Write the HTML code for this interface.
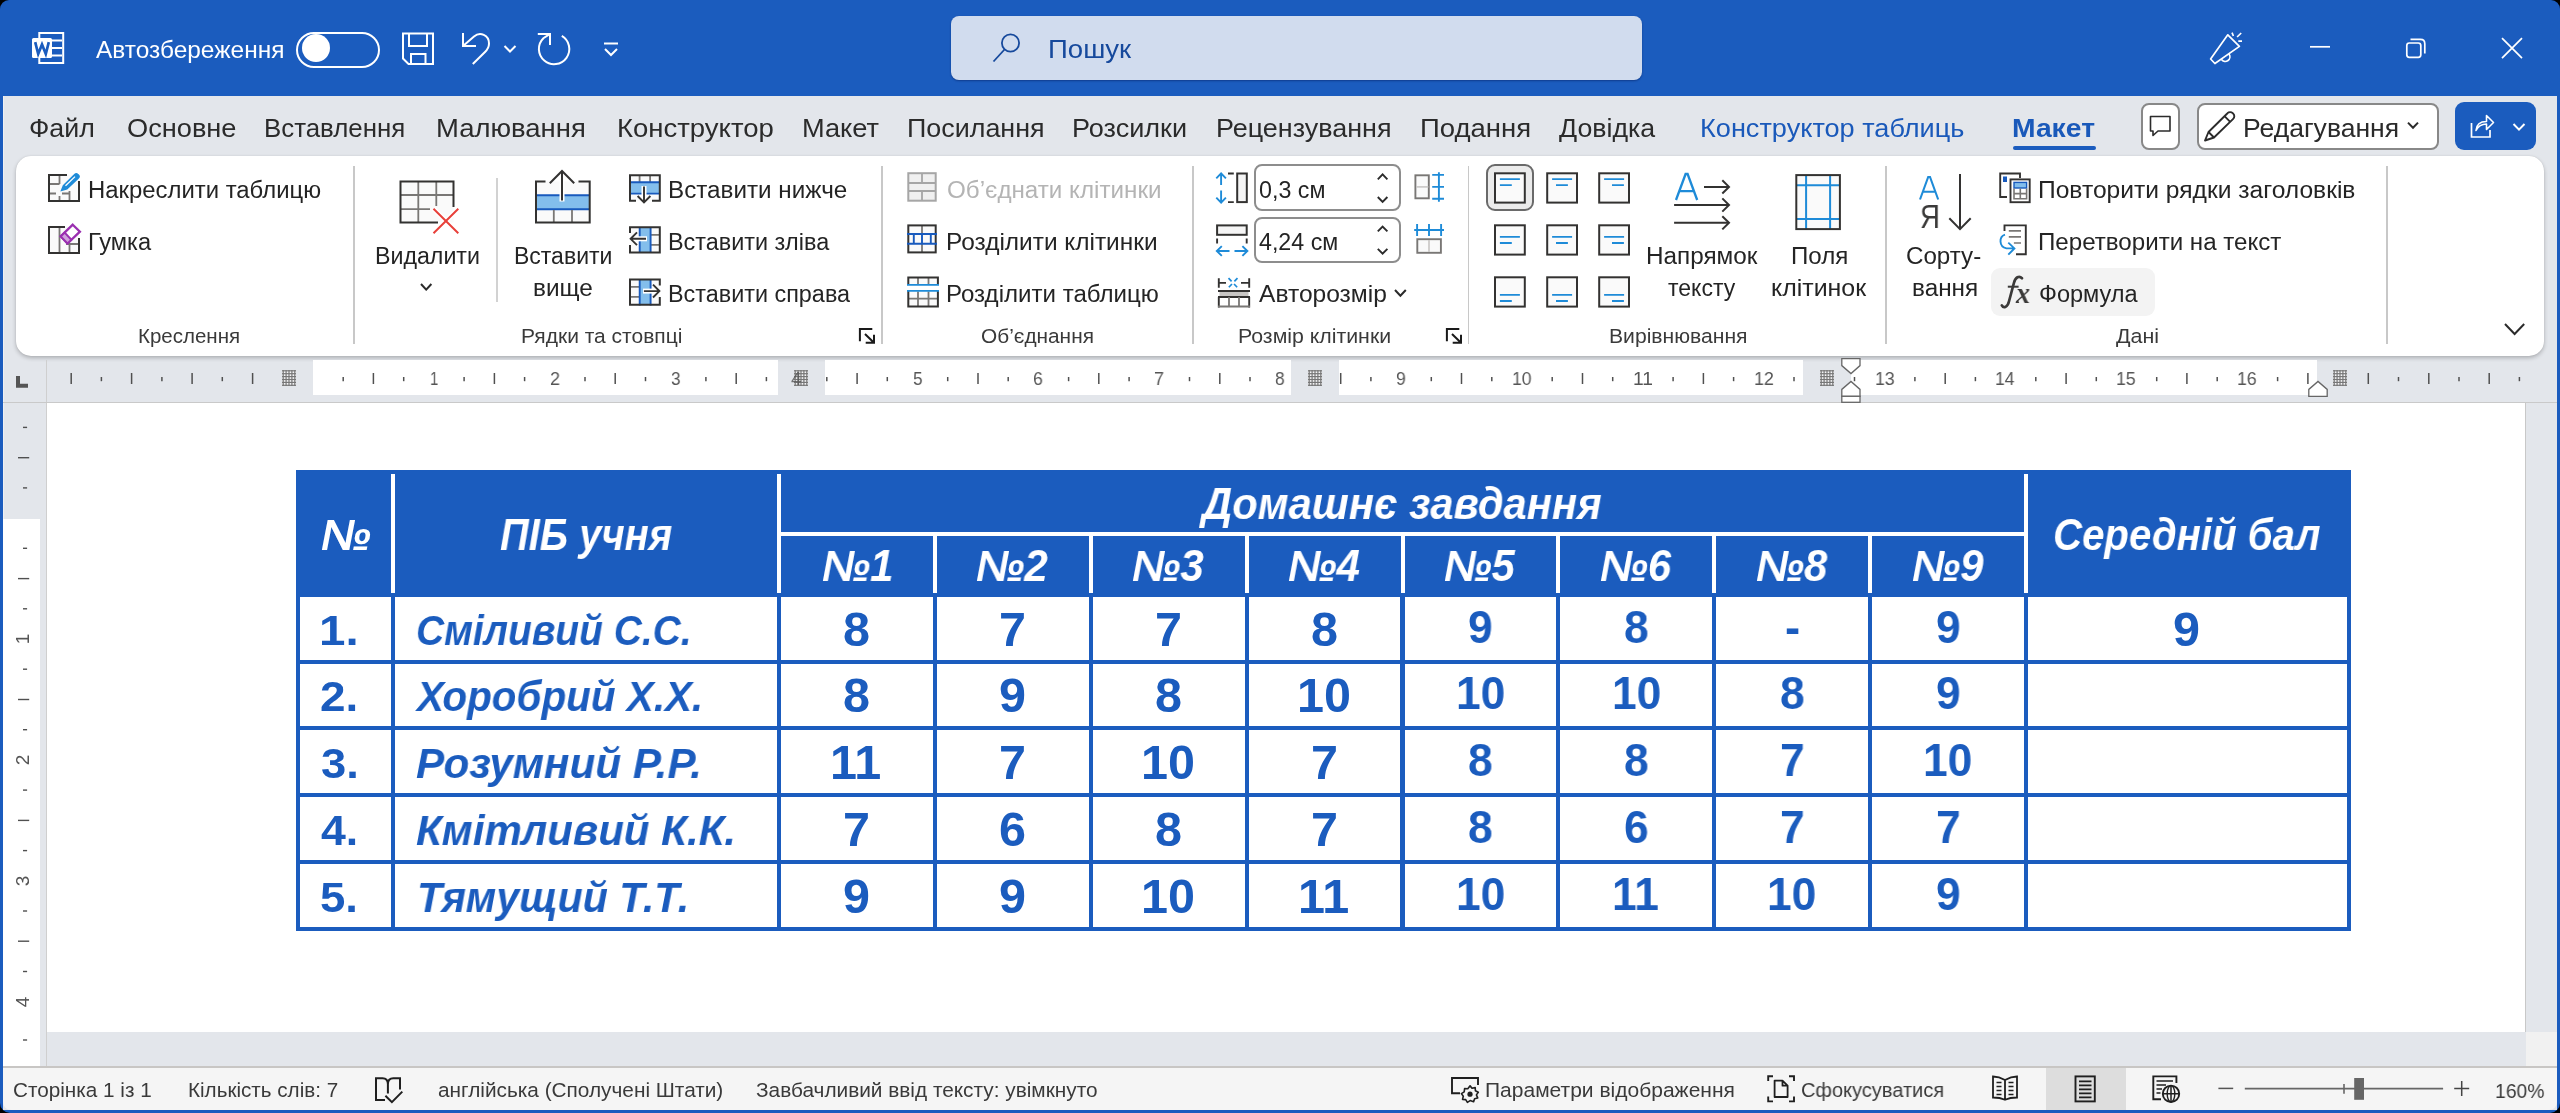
<!DOCTYPE html>
<html lang="uk"><head><meta charset="utf-8"><title>Word</title>
<style>
html,body{margin:0;padding:0;background:#000;overflow:hidden}
body{width:2560px;height:1113px;position:relative;font-family:"Liberation Sans",sans-serif}
#win{position:absolute;left:0;top:0;width:2560px;height:1113px;background:#1b5cbe;border-radius:9px 9px 10px 10px;overflow:hidden}
#win div,#win svg,#win span.t{position:absolute}
span.t{white-space:nowrap;line-height:1;transform-origin:0 0;display:block;will-change:transform}
</style></head><body><div id="win">
<div style="left:3px;top:96px;width:2554px;height:1014px;background:#e3e6eb;"></div>
<div style="left:3px;top:96px;width:1px;height:972px;background:#eef0f3;"></div>
<svg style="left:30px;top:30px;" width="38" height="36" viewBox="30 30 38 36" fill="none">
<rect x="39.3" y="33" width="23.9" height="30" stroke="#fff" stroke-width="2"/>
<path d="M52 40.5H62M52 48H62M52 55.5H62" stroke="#fff" stroke-width="2"/>
<rect x="32" y="38" width="20" height="20" rx="1.5" fill="#fff"/>
<path d="M35.2 42.2L38.2 54L42 44.5L45.8 54L48.8 42.2" stroke="#1b5cbe" stroke-width="2.7" stroke-linejoin="miter"/>
</svg>
<span class="t" style="left:96.00px;top:38.75px;font-size:23px;color:#fff;transform:scaleX(1.0631);">Автозбереження</span>
<div style="left:296px;top:31.5px;width:84px;height:36px;background:transparent;box-sizing:border-box;border:2px solid #fff;border-radius:18px"></div>
<div style="left:302px;top:34px;width:28px;height:28px;background:#fff;border-radius:14px"></div>
<svg style="left:398px;top:28px;" width="230" height="42" viewBox="398 28 230 42" fill="none">
<path d="M403 33.5H433V64H408.5L403 58.5Z" stroke="#fff" stroke-width="2"/>
<path d="M409 33.5V46H427V33.5" stroke="#fff" stroke-width="2"/>
<path d="M411 64V54H425.5V64" stroke="#fff" stroke-width="2"/>
<path d="M463 33V46H476" stroke="#fff" stroke-width="2"/>
<path d="M463 46L474 36.5C480 31.5 489 35 489 43.5C489 46.5 487.5 49.5 485 52L472.8 64" stroke="#fff" stroke-width="2"/>
<path d="M504.5 46L510 51.5L515.5 46" stroke="#fff" stroke-width="2"/>
<path d="M537.8 33.9H550V45" stroke="#fff" stroke-width="2"/>
<path d="M550 33.9L543.4 38.2A15.2 15.2 0 1 0 561.8 35.9" stroke="#fff" stroke-width="2"/>
<path d="M604 43.5H618" stroke="#fff" stroke-width="2"/>
<path d="M605 49L611 55L617 49" stroke="#fff" stroke-width="2"/>
</svg>
<div style="left:951px;top:16px;width:691px;height:64px;background:#d1dcee;border-radius:8px;box-shadow:0 1px 2px rgba(0,20,80,.45)"></div>
<svg style="left:990px;top:30px;" width="34" height="36" viewBox="990 30 34 36" fill="none"><circle cx="1010.5" cy="43" r="8.6" stroke="#16499c" stroke-width="1.8"/><path d="M1004.5 49.5L993.5 61.5" stroke="#16499c" stroke-width="1.8"/></svg>
<span class="t" style="left:1047.69px;top:36.75px;font-size:25px;color:#16499c;transform:scaleX(1.1026);">Пошук</span>
<svg style="left:2200px;top:28px;" width="340" height="44" viewBox="2200 28 340 44" fill="none">
<path d="M2227.8 34.8L2239.4 46.4L2214.9 63.5L2210.6 59Z" stroke="#fff" stroke-width="1.7" stroke-linejoin="round"/>
<path d="M2221.5 59.5A4.2 4.2 0 0 0 2229 54" stroke="#fff" stroke-width="1.7"/>
<path d="M2232 32.6L2233.4 36M2237.1 37L2241.2 33M2238.3 41.2H2242" stroke="#fff" stroke-width="1.7"/>
<path d="M2310 46.8H2330" stroke="#fff" stroke-width="1.7"/>
<rect x="2406.8" y="43" width="14" height="14.3" rx="2.5" stroke="#fff" stroke-width="1.7"/>
<path d="M2410.5 39.4H2420.5Q2424.8 39.4 2424.8 43.7V53.5" stroke="#fff" stroke-width="1.7"/>
<path d="M2502 38.1L2522 58.1M2522 38.1L2502 58.1" stroke="#fff" stroke-width="1.7"/>
</svg>
<span class="t" style="left:29.03px;top:115.75px;font-size:25px;color:#2b2b2b;transform:scaleX(1.0707);">Файл</span>
<span class="t" style="left:127.28px;top:115.75px;font-size:25px;color:#2b2b2b;transform:scaleX(1.0877);">Основне</span>
<span class="t" style="left:264.23px;top:115.75px;font-size:25px;color:#2b2b2b;transform:scaleX(1.0338);">Вставлення</span>
<span class="t" style="left:435.80px;top:115.75px;font-size:25px;color:#2b2b2b;transform:scaleX(1.0983);">Малювання</span>
<span class="t" style="left:617.30px;top:115.75px;font-size:25px;color:#2b2b2b;transform:scaleX(1.1004);">Конструктор</span>
<span class="t" style="left:802.32px;top:115.75px;font-size:25px;color:#2b2b2b;transform:scaleX(1.0886);">Макет</span>
<span class="t" style="left:906.65px;top:115.75px;font-size:25px;color:#2b2b2b;transform:scaleX(1.0750);">Посилання</span>
<span class="t" style="left:1072.34px;top:115.75px;font-size:25px;color:#2b2b2b;transform:scaleX(1.0816);">Розсилки</span>
<span class="t" style="left:1215.85px;top:115.75px;font-size:25px;color:#2b2b2b;transform:scaleX(1.0769);">Рецензування</span>
<span class="t" style="left:1420.30px;top:115.75px;font-size:25px;color:#2b2b2b;transform:scaleX(1.1003);">Подання</span>
<span class="t" style="left:1559.37px;top:115.75px;font-size:25px;color:#2b2b2b;transform:scaleX(1.0696);">Довідка</span>
<span class="t" style="left:1700.13px;top:115.75px;font-size:25px;color:#1a59ba;transform:scaleX(1.0851);">Конструктор таблиць</span>
<span class="t" style="left:2012.26px;top:115.75px;font-size:25px;color:#1a59ba;font-weight:bold;transform:scaleX(1.1310);">Макет</span>
<div style="left:2012.5px;top:146px;width:83.3px;height:4px;background:#1b5cbe;border-radius:2px"></div>
<div style="left:2140.5px;top:102.5px;width:39.5px;height:47px;background:#fff;box-sizing:border-box;border:2px solid #888;border-radius:8px"></div>
<div style="left:2196.5px;top:102.5px;width:242px;height:47px;background:#fff;box-sizing:border-box;border:2px solid #888;border-radius:8px"></div>
<div style="left:2455px;top:101.5px;width:81px;height:48.5px;background:#1b5cbe;border-radius:9px"></div>
<span class="t" style="left:2243.18px;top:115.75px;font-size:25px;color:#2b2b2b;transform:scaleX(1.0613);">Редагування</span>
<svg style="left:2140px;top:100px;" width="400" height="52" viewBox="2140 100 400 52" fill="none">
<path d="M2150.5 116.5H2170V131H2158L2153 135.5V131H2150.5Z" stroke="#2b2b2b" stroke-width="1.6" stroke-linejoin="round"/>
<path d="M2205 140.5L2208.5 132L2227.5 113.2A3.6 3.6 0 0 1 2232.7 113.2L2233.2 113.7A3.6 3.6 0 0 1 2233.2 118.9L2214 137.5Z" stroke="#2b2b2b" stroke-width="1.9" stroke-linejoin="round"/>
<path d="M2208.5 132L2214 137.5M2224.5 116.2L2230.2 121.9" stroke="#2b2b2b" stroke-width="1.9"/>
<path d="M2408 122.6L2413 127.8L2418 122.6" stroke="#2b2b2b" stroke-width="2"/>
<path d="M2471.5 123V137H2490V130" stroke="#fff" stroke-width="1.7"/>
<path d="M2476 130.5C2476.5 124 2481 121.5 2486.5 121.5V115.5L2493.5 122.5L2486.5 129.5V124C2482 124 2478.5 125.5 2476 130.5Z" stroke="#fff" stroke-width="1.6" stroke-linejoin="round"/>
<path d="M2513.5 124L2519 129.6L2524.5 124" stroke="#fff" stroke-width="2"/>
</svg>
<div style="left:16px;top:156px;width:2528px;height:200px;background:#fff;border-radius:15px;box-shadow:0 2px 4px rgba(0,0,0,.24),0 0 1px rgba(0,0,0,.14)"></div>
<div style="left:353.2px;top:166px;width:1.6px;height:178px;background:#c8c8c8;"></div>
<div style="left:881.2px;top:166px;width:1.6px;height:178px;background:#c8c8c8;"></div>
<div style="left:1192.2px;top:166px;width:1.6px;height:178px;background:#c8c8c8;"></div>
<div style="left:1467.8px;top:166px;width:1.6px;height:178px;background:#c8c8c8;"></div>
<div style="left:1885.2px;top:166px;width:1.6px;height:178px;background:#c8c8c8;"></div>
<div style="left:2386.2px;top:166px;width:1.6px;height:178px;background:#c8c8c8;"></div>
<svg style="left:44px;top:168px;" width="42" height="90" viewBox="44 168 42 90" fill="none">
<rect x="49" y="175" width="30" height="26" fill="#fafafa"/>
<path d="M59.5 175V184M49 184H59.5M49 193.5H56M59.5 196V201M69.5 191V201M62 193.5H69.5" stroke="#797775" stroke-width="1.8"/>
<path d="M67 175H49V201H79V181" stroke="#333231" stroke-width="2"/>
<path d="M60.3 191.6L62.8 185.2L74.2 173.9A2.9 2.9 0 0 1 78.3 173.9L78.9 174.5A2.9 2.9 0 0 1 78.9 178.6L67.3 189.6Z" fill="#1e8bd8"/>
<path d="M65.5 185.8L75 176.6" stroke="#fff" stroke-width="1.3"/>
<rect x="49" y="227" width="30" height="26" fill="#fafafa"/>
<path d="M59.5 227V253M69.5 244V253M66 244H79" stroke="#797775" stroke-width="1.8"/>
<path d="M65 227H49V253H79V238" stroke="#333231" stroke-width="2"/>
<path d="M72.75 224.7L79.9 231.7L67.5 243.5L60.7 236.4Z" fill="#fff" stroke="#9a2fb0" stroke-width="2.3" stroke-linejoin="miter"/>
<path d="M64.7 232.6L71.4 239.8L67.5 243.5L60.7 236.4Z" fill="#cfa3dc" stroke="#9a2fb0" stroke-width="2"/>
</svg>
<span class="t" style="left:87.89px;top:178.75px;font-size:23px;color:#242424;transform:scaleX(1.0382);">Накреслити таблицю</span>
<span class="t" style="left:87.91px;top:230.75px;font-size:23px;color:#242424;transform:scaleX(1.0293);">Гумка</span>
<span class="t" style="left:137.86px;top:325.50px;font-size:20.5px;color:#3a3a3a;">Креслення</span>
<svg style="left:396px;top:168px;" width="70" height="70" viewBox="396 168 70 70" fill="none">
<rect x="400.5" y="181.5" width="53" height="41" fill="#fafafa"/>
<path d="M418.3 181.5V222.5M436.3 181.5V206M400.5 195H453.5M400.5 209.2H430" stroke="#797775" stroke-width="1.8"/>
<path d="M453.5 207V181.5H400.5V222.5H438" stroke="#333231" stroke-width="2"/>
<path d="M433.5 208.8L458.3 233.2M458.3 208.8L433.5 233.2" stroke="#fff" stroke-width="5"/>
<path d="M433.5 208.8L458.3 233.2M458.3 208.8L433.5 233.2" stroke="#e8403a" stroke-width="2"/>
</svg>
<span class="t" style="left:374.64px;top:244.75px;font-size:23px;color:#242424;transform:scaleX(1.0087);">Видалити</span>
<svg style="left:419.0px;top:281.9px;" width="14.4" height="9.6" viewBox="419.0 281.9 14.4 9.6" fill="none"><path d="M421.0 283.9L426.2 289.5L431.4 283.9" stroke="#2b2b2b" stroke-width="2"/></svg>
<div style="left:496.25px;top:178px;width:1.5px;height:124px;background:#d2d2d2;"></div>
<svg style="left:532px;top:168px;" width="62" height="58" viewBox="532 168 62 58" fill="none">
<rect x="536" y="181.5" width="53.7" height="41" fill="#fafafa"/>
<rect x="537" y="195.2" width="52" height="14" fill="#83beec"/>
<path d="M536 195.2H590M536 209.2H590" stroke="#185abd" stroke-width="2"/>
<path d="M553.8 210V222.5M572 210V222.5" stroke="#797775" stroke-width="1.8"/>
<path d="M545.5 181.5H536V222.5H589.7V181.5H578.5" stroke="#333231" stroke-width="2"/>
<path d="M562 172V201.5" stroke="#fff" stroke-width="5"/>
<path d="M562 171.6V200.5M549.8 183.2L562 171L574.2 183.2" stroke="#333231" stroke-width="2"/>
</svg>
<span class="t" style="left:513.66px;top:244.75px;font-size:23px;color:#242424;">Вставити</span>
<span class="t" style="left:532.99px;top:276.75px;font-size:23px;color:#242424;transform:scaleX(1.0591);">вище</span>
<svg style="left:626px;top:170px;" width="40" height="140" viewBox="626 170 40 140" fill="none">
<rect x="630" y="175.3" width="29.8" height="25.4" fill="#fafafa"/>
<path d="M639.6 175V182M650.1 175V182" stroke="#797775" stroke-width="1.8"/>
<rect x="631" y="182" width="28" height="12" fill="#83beec"/>
<path d="M630 182.3H660M630 193.6H660" stroke="#185abd" stroke-width="1.9"/>
<path d="M636 200.7H630V175.3H659.8V200.7H652" stroke="#333231" stroke-width="2"/>
<path d="M644 186V201" stroke="#fff" stroke-width="5"/>
<path d="M644 186.6V202M637.6 196L644 202.4L650.4 196" stroke="#333231" stroke-width="1.9"/>
<rect x="630" y="227.3" width="29.8" height="25.2" fill="#fafafa"/>
<path d="M651 234.8H660M651 244.8H660" stroke="#797775" stroke-width="1.8"/>
<rect x="640" y="228" width="10.5" height="24" fill="#83beec"/>
<path d="M639.7 227V253M650.6 227V253" stroke="#185abd" stroke-width="1.9"/>
<path d="M630 233V227.3H659.8V252.5H630V245" stroke="#333231" stroke-width="2"/>
<path d="M632 238.8H647" stroke="#fff" stroke-width="5"/>
<path d="M646 238.8H630.6M637 232.4L630.6 238.8L637 245.2" stroke="#333231" stroke-width="1.9"/>
<rect x="630" y="279.5" width="29.8" height="25.2" fill="#fafafa"/>
<path d="M630 286.8H639M630 296.9H639" stroke="#797775" stroke-width="1.8"/>
<rect x="640" y="280" width="10.5" height="24" fill="#83beec"/>
<path d="M639.7 279V305.5M650.6 279V305.5" stroke="#185abd" stroke-width="1.9"/>
<path d="M659.8 285.5V279.5H630V304.7H659.8V297" stroke="#333231" stroke-width="2"/>
<path d="M643 291.1H658" stroke="#fff" stroke-width="5"/>
<path d="M643.9 291.1H659.4M653 284.7L659.4 291.1L653 297.5" stroke="#333231" stroke-width="1.9"/>
</svg>
<span class="t" style="left:667.86px;top:178.75px;font-size:23px;color:#242424;transform:scaleX(1.0530);">Вставити нижче</span>
<span class="t" style="left:667.93px;top:230.75px;font-size:23px;color:#242424;transform:scaleX(1.0179);">Вставити зліва</span>
<span class="t" style="left:667.93px;top:282.75px;font-size:23px;color:#242424;transform:scaleX(1.0168);">Вставити справа</span>
<span class="t" style="left:521.32px;top:325.50px;font-size:20.5px;color:#3a3a3a;transform:scaleX(1.0248);">Рядки та стовпці</span>
<svg style="left:858px;top:327px;" width="19" height="19" viewBox="858 327 19 19" fill="none"><path d="M859.9 341.2V328.9H872.3" stroke="#1a1a1a" stroke-width="2"/><path d="M865 334L874 342.8M865.7 342.8H874V334.7" stroke="#1a1a1a" stroke-width="2"/></svg>
<svg style="left:904px;top:168px;" width="40" height="144" viewBox="904 168 40 144" fill="none">
<rect x="908.3" y="173.2" width="27.4" height="27.5" fill="#f0f0f0" stroke="#a6a6a6" stroke-width="2"/>
<path d="M908 183H936M908 191H936M922 173V183M922 191V201" stroke="#a6a6a6" stroke-width="1.8"/>
<rect x="908.3" y="225.4" width="27.4" height="27" fill="#fafafa"/>
<path d="M922 225.4V234M922 244V252.4" stroke="#797775" stroke-width="1.8"/>
<rect x="908.3" y="225.4" width="27.4" height="27" stroke="#333231" stroke-width="2"/>
<path d="M907 234H937M907 243.7H937M913.8 234V243.7M922 234V243.7M930.8 234V243.7" stroke="#185abd" stroke-width="1.9"/>
<rect x="908.3" y="277.4" width="29.6" height="29" fill="#fafafa"/>
<path d="M918 277.4V284M928.5 277.4V284M918 291.5V306.4M928.5 291.5V306.4M908.3 298.7H938" stroke="#797775" stroke-width="1.8"/>
<path d="M908.3 284.5V277.4H937.9V284.5M908.3 291V306.4H937.9V291" stroke="#333231" stroke-width="2"/>
<rect x="906" y="285.8" width="34" height="4.2" fill="#fff"/>
<path d="M907 284.9H939M907 290.9H939" stroke="#1e8bd8" stroke-width="1.9"/>
</svg>
<span class="t" style="left:946.71px;top:178.75px;font-size:23px;color:#b4b4b4;transform:scaleX(1.0518);">Об’єднати клітинки</span>
<span class="t" style="left:945.85px;top:230.75px;font-size:23px;color:#242424;transform:scaleX(1.0614);">Розділити клітинки</span>
<span class="t" style="left:945.87px;top:282.75px;font-size:23px;color:#242424;transform:scaleX(1.0465);">Розділити таблицю</span>
<span class="t" style="left:981.36px;top:325.50px;font-size:20.5px;color:#3a3a3a;transform:scaleX(1.0160);">Об’єднання</span>
<div style="left:1253.8px;top:164.4px;width:147.6px;height:46.8px;background:#fff;box-sizing:border-box;border:2px solid #8d8d8d;border-radius:8px"></div>
<div style="left:1253.8px;top:216.5px;width:147.6px;height:46.8px;background:#fff;box-sizing:border-box;border:2px solid #8d8d8d;border-radius:8px"></div>
<span class="t" style="left:1258.77px;top:178.75px;font-size:23px;color:#242424;transform:scaleX(1.0103);">0,3 см</span>
<span class="t" style="left:1258.74px;top:230.75px;font-size:23px;color:#242424;transform:scaleX(1.0095);">4,24 см</span>
<svg style="left:1212px;top:168px;" width="240" height="144" viewBox="1212 168 240 144" fill="none">
<path d="M1221.1 173.5V185M1221.1 190.5V202.5M1216.3 178.3L1221.1 173.4L1225.9 178.3M1216.3 197.7L1221.1 202.6L1225.9 197.7" stroke="#1e8bd8" stroke-width="1.9"/>
<rect x="1237.2" y="173.5" width="9.6" height="28.6" fill="#f5f5f5" stroke="#333231" stroke-width="2"/>
<path d="M1228 173.5H1233.8M1228 202.1H1233.8" stroke="#333231" stroke-width="1.9"/>
<path d="M1377.8 179.3L1382.6 174.4L1387.4 179.3M1377.8 197L1382.6 201.9L1387.4 197" stroke="#2b2b2b" stroke-width="1.9"/>
<rect x="1415.4" y="175.3" width="13.4" height="23" fill="#fafafa" stroke="#797775" stroke-width="1.9"/>
<path d="M1416 186.9H1428.4" stroke="#c8c6c4" stroke-width="1.6"/>
<path d="M1438.9 172.2V201.7M1432.2 174.9H1444M1432.2 186.9H1444M1432.2 198.8H1444" stroke="#1e8bd8" stroke-width="1.9"/>
<rect x="1217.1" y="225.4" width="29.6" height="9.4" fill="#f5f5f5" stroke="#333231" stroke-width="2"/>
<path d="M1217.1 238.4V243.6M1246.7 238.4V243.6" stroke="#333231" stroke-width="1.9"/>
<path d="M1216.8 251H1229.5M1234.5 251H1247.4M1221.8 246.1L1216.8 251L1221.8 255.9M1242.4 246.1L1247.4 251L1242.4 255.9" stroke="#1e8bd8" stroke-width="1.9"/>
<path d="M1377.8 231.4L1382.6 226.5L1387.4 231.4M1377.8 248.8L1382.6 253.7L1387.4 248.8" stroke="#2b2b2b" stroke-width="1.9"/>
<path d="M1414.2 230H1444M1417.1 224V236M1429 224V236M1441.1 224V236" stroke="#1e8bd8" stroke-width="1.9"/>
<rect x="1417.3" y="239.2" width="23.6" height="13.6" fill="#fafafa" stroke="#797775" stroke-width="1.9"/>
<path d="M1429 240V252" stroke="#c8c6c4" stroke-width="1.6"/>
<path d="M1218.8 278.2V287.7M1249.2 278.2V287.7M1218.8 282.9H1226M1241 282.9H1249.2" stroke="#333231" stroke-width="1.9"/>
<path d="M1228.5 278.2L1237.5 287.6M1237.5 278.2L1228.5 287.6" stroke="#1e8bd8" stroke-width="1.7" stroke-dasharray="4.5 3.5"/>
<rect x="1219.5" y="291.8" width="29" height="4.6" fill="#c8c6c4"/>
<path d="M1218 291H1250M1218 297H1250" stroke="#333231" stroke-width="1.9"/>
<path d="M1218.8 297V307.5M1249.2 297V307.5" stroke="#333231" stroke-width="1.9"/>
<path d="M1229 297V307.5M1239 297V307.5M1218 306.5H1250" stroke="#797775" stroke-width="1.8"/>
</svg>
<span class="t" style="left:1258.70px;top:282.75px;font-size:23px;color:#242424;transform:scaleX(1.0682);">Авторозмір</span>
<svg style="left:1392.6px;top:288.1px;" width="14.8" height="9.8" viewBox="1392.6 288.1 14.8 9.8" fill="none"><path d="M1394.6 290.1L1400 295.9L1405.4 290.1" stroke="#2b2b2b" stroke-width="2"/></svg>
<span class="t" style="left:1238.20px;top:325.50px;font-size:20.5px;color:#3a3a3a;transform:scaleX(1.0387);">Розмір клітинки</span>
<svg style="left:1445.2px;top:327px;" width="19" height="19" viewBox="1445.2 327 19 19" fill="none"><path d="M1447.1000000000001 341.2V328.9H1459.5" stroke="#1a1a1a" stroke-width="2"/><path d="M1452.2 334L1461.2 342.8M1452.9 342.8H1461.2V334.7" stroke="#1a1a1a" stroke-width="2"/></svg>
<div style="left:1486.2px;top:164.4px;width:47.6px;height:47px;background:#ebebeb;box-sizing:border-box;border:2px solid #6a6a6a;border-radius:9px"></div>
<svg style="left:1490px;top:168px;" width="144" height="144" viewBox="1490 168 144 144" fill="none"><rect x="1495" y="173.3" width="29.8" height="29.3" fill="#fafafa" stroke="#333231" stroke-width="2"/><path d="M1499.9 179.1H1519.9M1499.9 185.2h11.9" stroke="#1e8bd8" stroke-width="1.8"/><rect x="1547.2" y="173.3" width="29.8" height="29.3" fill="#fafafa" stroke="#333231" stroke-width="2"/><path d="M1552.1000000000001 179.1H1572.1000000000001M1556.0 185.2h11.9" stroke="#1e8bd8" stroke-width="1.8"/><rect x="1599.2" y="173.3" width="29.8" height="29.3" fill="#fafafa" stroke="#333231" stroke-width="2"/><path d="M1604.1000000000001 179.1H1624.1000000000001M1612.0 185.2h11.9" stroke="#1e8bd8" stroke-width="1.8"/><rect x="1495" y="225.3" width="29.8" height="29.3" fill="#fafafa" stroke="#333231" stroke-width="2"/><path d="M1499.9 236.9H1519.9M1499.9 243.0h11.9" stroke="#1e8bd8" stroke-width="1.8"/><rect x="1547.2" y="225.3" width="29.8" height="29.3" fill="#fafafa" stroke="#333231" stroke-width="2"/><path d="M1552.1000000000001 236.9H1572.1000000000001M1556.0 243.0h11.9" stroke="#1e8bd8" stroke-width="1.8"/><rect x="1599.2" y="225.3" width="29.8" height="29.3" fill="#fafafa" stroke="#333231" stroke-width="2"/><path d="M1604.1000000000001 236.9H1624.1000000000001M1612.0 243.0h11.9" stroke="#1e8bd8" stroke-width="1.8"/><rect x="1495" y="277.3" width="29.8" height="29.3" fill="#fafafa" stroke="#333231" stroke-width="2"/><path d="M1499.9 294.9H1519.9M1499.9 301.0h11.9" stroke="#1e8bd8" stroke-width="1.8"/><rect x="1547.2" y="277.3" width="29.8" height="29.3" fill="#fafafa" stroke="#333231" stroke-width="2"/><path d="M1552.1000000000001 294.9H1572.1000000000001M1556.0 301.0h11.9" stroke="#1e8bd8" stroke-width="1.8"/><rect x="1599.2" y="277.3" width="29.8" height="29.3" fill="#fafafa" stroke="#333231" stroke-width="2"/><path d="M1604.1000000000001 294.9H1624.1000000000001M1612.0 301.0h11.9" stroke="#1e8bd8" stroke-width="1.8"/></svg>
<svg style="left:1670px;top:168px;" width="64" height="64" viewBox="1670 168 64 64" fill="none">
<path d="M1704 186.9H1728.5M1674.1 205H1728.5M1674.1 222.8H1728.5" stroke="#333231" stroke-width="2"/>
<path d="M1722.3 180.3L1729 186.9L1722.3 193.5M1722.3 198.4L1729 205L1722.3 211.6M1722.3 216.2L1729 222.8L1722.3 229.4" stroke="#333231" stroke-width="2"/>
<path d="M1676 200L1685.6 174H1687.6L1697.2 200M1679.4 191.2H1693.8" stroke="#1e8bd8" stroke-width="2.3" stroke-linejoin="miter"/>
</svg>
<span class="t" style="left:1645.56px;top:244.75px;font-size:23px;color:#242424;transform:scaleX(1.0556);">Напрямок</span>
<span class="t" style="left:1668.06px;top:276.75px;font-size:23px;color:#242424;">тексту</span>
<svg style="left:1792px;top:170px;" width="52" height="64" viewBox="1792 170 52 64" fill="none">
<rect x="1796.3" y="175.1" width="43.6" height="54" fill="#fafafa"/>
<path d="M1806.1 175V229M1830.1 175V229M1796 185.2H1840M1796 218.9H1840" stroke="#1e8bd8" stroke-width="2"/>
<rect x="1796.3" y="175.1" width="43.6" height="54" stroke="#333231" stroke-width="2"/>
</svg>
<span class="t" style="left:1790.57px;top:244.75px;font-size:23px;color:#242424;transform:scaleX(1.0470);">Поля</span>
<span class="t" style="left:1770.68px;top:276.75px;font-size:23px;color:#242424;transform:scaleX(1.0826);">клітинок</span>
<span class="t" style="left:1608.61px;top:325.50px;font-size:20.5px;color:#3a3a3a;transform:scaleX(1.0304);">Вирівнювання</span>
<svg style="left:1914px;top:170px;" width="62" height="64" viewBox="1914 170 62 64" fill="none">
<path d="M1920 199.5L1928.2 177H1930L1938.2 199.5M1923 191.8H1935.2" stroke="#1e8bd8" stroke-width="2.1" stroke-linejoin="miter"/>
<path d="M1960 174.1V228.6M1949.3 218.2L1960 229.1L1970.7 218.2" stroke="#333231" stroke-width="2"/>
</svg>
<span class="t" style="left:1919.72px;top:200.25px;font-size:33px;color:#3b3a39;transform:scaleX(0.8372);">Я</span>
<span class="t" style="left:1906.29px;top:244.75px;font-size:23px;color:#242424;transform:scaleX(1.0495);">Сорту-</span>
<span class="t" style="left:1911.50px;top:276.75px;font-size:23px;color:#242424;transform:scaleX(1.0563);">вання</span>
<div style="left:1991.3px;top:268.2px;width:164px;height:47.4px;background:#f3f3f3;border-radius:9px"></div>
<svg style="left:1996px;top:170px;" width="40" height="90" viewBox="1996 170 40 90" fill="none">
<path d="M2007 197H2000.2V173.5H2020V178" stroke="#333231" stroke-width="1.9"/>
<rect x="2003" y="176.5" width="4" height="5.5" fill="#185abd"/>
<rect x="2010.5" y="179.4" width="19.2" height="22.8" fill="#fff" stroke="#333231" stroke-width="1.9"/>
<rect x="2014" y="182.4" width="12.6" height="5.6" fill="#83beec" stroke="#185abd" stroke-width="1.4"/>
<path d="M2014 188.5V198.8H2026.6V188.5M2020.3 188.5V198.8M2014 193.6H2026.6" stroke="#797775" stroke-width="1.6"/>
<path d="M2004.5 231V225.4H2025.8V254.2H2016" stroke="#333231" stroke-width="1.9"/>
<path d="M2008.8 230.9H2021M2008.8 236.9H2021M2013.9 243H2021" stroke="#797775" stroke-width="1.7"/>
<path d="M2005 234.6C1999 236.5 1998.5 246.5 2006.5 248.4H2014M2008.3 242.6L2014.4 248.4L2008.3 254.6" stroke="#1e8bd8" stroke-width="1.9"/>
</svg>
<span class="t" style="left:2038.03px;top:178.75px;font-size:23px;color:#242424;transform:scaleX(1.0695);">Повторити рядки заголовків</span>
<span class="t" style="left:2038.07px;top:230.75px;font-size:23px;color:#242424;transform:scaleX(1.0484);">Перетворити на текст</span>
<span class="t" style="left:2038.50px;top:282.75px;font-size:23px;color:#242424;transform:scaleX(1.0241);">Формула</span>
<svg style="left:1998px;top:272px;" width="28" height="40" viewBox="1998 272 28 40" fill="none"><path d="M2001.8 305.4C2003.6 308.6 2007.6 307.6 2009.1 301L2013.9 283C2015.4 277 2019.2 275.4 2022 278.3" stroke="#3b3a39" stroke-width="2.7" stroke-linecap="round"/><path d="M2007.8 286.7H2018.6" stroke="#3b3a39" stroke-width="2"/></svg>
<span class="t" style="left:2016.12px;top:278.75px;font-size:29px;color:#3b3a39;font-weight:bold;font-style:italic;font-family:'Liberation Serif',serif;transform:scaleX(0.9641);">x</span>
<span class="t" style="left:2115.89px;top:325.50px;font-size:20.5px;color:#3a3a3a;transform:scaleX(1.0462);">Дані</span>
<svg style="left:2503.4px;top:321.6px;" width="23.2" height="14" viewBox="2503.4 321.6 23.2 14" fill="none"><path d="M2505.4 323.6L2515 333.6L2524.6 323.6" stroke="#2b2b2b" stroke-width="2"/></svg>
<div style="left:313px;top:360px;width:465px;height:35px;background:#fff;"></div>
<div style="left:825px;top:360px;width:466px;height:35px;background:#fff;"></div>
<div style="left:1339px;top:360px;width:464px;height:35px;background:#fff;"></div>
<div style="left:1850.6px;top:360px;width:466.4000000000001px;height:35px;background:#fff;"></div>
<div style="left:3px;top:402px;width:2554px;height:1px;background:#c9c9c9;"></div>
<div style="left:46px;top:360px;width:1px;height:42px;background:#cfcfcf;"></div>
<svg style="left:14px;top:374px;" width="18" height="16" viewBox="14 374 18 16" fill="none"><path d="M18 376V385.8H28" stroke="#555" stroke-width="4"/></svg>
<svg style="left:60px;top:370px;" width="2497" height="18" viewBox="60 370 2497 18" fill="none"><path d="M71.2 373V384" stroke="#505050" stroke-width="1.5"/><path d="M101.4 377V381.2" stroke="#505050" stroke-width="1.5"/><path d="M131.6 373V384" stroke="#505050" stroke-width="1.5"/><path d="M161.9 377V381.2" stroke="#505050" stroke-width="1.5"/><path d="M192.1 373V384" stroke="#505050" stroke-width="1.5"/><path d="M222.3 377V381.2" stroke="#505050" stroke-width="1.5"/><path d="M252.6 373V384" stroke="#505050" stroke-width="1.5"/><path d="M282.8 377V381.2" stroke="#505050" stroke-width="1.5"/><path d="M343.2 377V381.2" stroke="#505050" stroke-width="1.5"/><path d="M373.4 373V384" stroke="#505050" stroke-width="1.5"/><path d="M403.7 377V381.2" stroke="#505050" stroke-width="1.5"/><path d="M464.1 377V381.2" stroke="#505050" stroke-width="1.5"/><path d="M494.4 373V384" stroke="#505050" stroke-width="1.5"/><path d="M524.6 377V381.2" stroke="#505050" stroke-width="1.5"/><path d="M585.0 377V381.2" stroke="#505050" stroke-width="1.5"/><path d="M615.2 373V384" stroke="#505050" stroke-width="1.5"/><path d="M645.5 377V381.2" stroke="#505050" stroke-width="1.5"/><path d="M705.9 377V381.2" stroke="#505050" stroke-width="1.5"/><path d="M736.2 373V384" stroke="#505050" stroke-width="1.5"/><path d="M766.4 377V381.2" stroke="#505050" stroke-width="1.5"/><path d="M826.8 377V381.2" stroke="#505050" stroke-width="1.5"/><path d="M857.1 373V384" stroke="#505050" stroke-width="1.5"/><path d="M887.3 377V381.2" stroke="#505050" stroke-width="1.5"/><path d="M947.7 377V381.2" stroke="#505050" stroke-width="1.5"/><path d="M978.0 373V384" stroke="#505050" stroke-width="1.5"/><path d="M1008.2 377V381.2" stroke="#505050" stroke-width="1.5"/><path d="M1068.6 377V381.2" stroke="#505050" stroke-width="1.5"/><path d="M1098.8 373V384" stroke="#505050" stroke-width="1.5"/><path d="M1129.1 377V381.2" stroke="#505050" stroke-width="1.5"/><path d="M1189.5 377V381.2" stroke="#505050" stroke-width="1.5"/><path d="M1219.8 373V384" stroke="#505050" stroke-width="1.5"/><path d="M1250.0 377V381.2" stroke="#505050" stroke-width="1.5"/><path d="M1310.4 377V381.2" stroke="#505050" stroke-width="1.5"/><path d="M1340.7 373V384" stroke="#505050" stroke-width="1.5"/><path d="M1370.9 377V381.2" stroke="#505050" stroke-width="1.5"/><path d="M1431.3 377V381.2" stroke="#505050" stroke-width="1.5"/><path d="M1461.5 373V384" stroke="#505050" stroke-width="1.5"/><path d="M1491.8 377V381.2" stroke="#505050" stroke-width="1.5"/><path d="M1552.2 377V381.2" stroke="#505050" stroke-width="1.5"/><path d="M1582.5 373V384" stroke="#505050" stroke-width="1.5"/><path d="M1612.7 377V381.2" stroke="#505050" stroke-width="1.5"/><path d="M1673.1 377V381.2" stroke="#505050" stroke-width="1.5"/><path d="M1703.4 373V384" stroke="#505050" stroke-width="1.5"/><path d="M1733.6 377V381.2" stroke="#505050" stroke-width="1.5"/><path d="M1794.0 377V381.2" stroke="#505050" stroke-width="1.5"/><path d="M1824.2 373V384" stroke="#505050" stroke-width="1.5"/><path d="M1854.5 377V381.2" stroke="#505050" stroke-width="1.5"/><path d="M1914.9 377V381.2" stroke="#505050" stroke-width="1.5"/><path d="M1945.2 373V384" stroke="#505050" stroke-width="1.5"/><path d="M1975.4 377V381.2" stroke="#505050" stroke-width="1.5"/><path d="M2035.8 377V381.2" stroke="#505050" stroke-width="1.5"/><path d="M2066.1 373V384" stroke="#505050" stroke-width="1.5"/><path d="M2096.3 377V381.2" stroke="#505050" stroke-width="1.5"/><path d="M2156.7 377V381.2" stroke="#505050" stroke-width="1.5"/><path d="M2186.9 373V384" stroke="#505050" stroke-width="1.5"/><path d="M2217.2 377V381.2" stroke="#505050" stroke-width="1.5"/><path d="M2277.6 377V381.2" stroke="#505050" stroke-width="1.5"/><path d="M2307.9 373V384" stroke="#505050" stroke-width="1.5"/><path d="M2338.1 377V381.2" stroke="#505050" stroke-width="1.5"/><path d="M2368.3 373V384" stroke="#505050" stroke-width="1.5"/><path d="M2398.5 377V381.2" stroke="#505050" stroke-width="1.5"/><path d="M2428.8 373V384" stroke="#505050" stroke-width="1.5"/><path d="M2459.0 377V381.2" stroke="#505050" stroke-width="1.5"/><path d="M2489.2 373V384" stroke="#505050" stroke-width="1.5"/><path d="M2519.4 377V381.2" stroke="#505050" stroke-width="1.5"/></svg>
<span class="t" style="left:429.60px;top:369.25px;font-size:19px;color:#555;transform:scaleX(0.7743);">1</span>
<span class="t" style="left:549.80px;top:369.25px;font-size:19px;color:#555;transform:scaleX(0.9485);">2</span>
<span class="t" style="left:670.91px;top:369.25px;font-size:19px;color:#555;transform:scaleX(0.9086);">3</span>
<span class="t" style="left:912.71px;top:369.25px;font-size:19px;color:#555;transform:scaleX(0.9086);">5</span>
<span class="t" style="left:1033.42px;top:369.25px;font-size:19px;color:#555;transform:scaleX(0.9281);">6</span>
<span class="t" style="left:1154.30px;top:369.25px;font-size:19px;color:#555;transform:scaleX(0.9485);">7</span>
<span class="t" style="left:1275.31px;top:369.25px;font-size:19px;color:#555;transform:scaleX(0.9183);">8</span>
<span class="t" style="left:1396.21px;top:369.25px;font-size:19px;color:#555;transform:scaleX(0.9281);">9</span>
<span class="t" style="left:1511.88px;top:369.25px;font-size:19px;color:#555;transform:scaleX(0.9263);">10</span>
<span class="t" style="left:1632.66px;top:369.25px;font-size:19px;color:#555;transform:scaleX(1.0124);">11</span>
<span class="t" style="left:1753.66px;top:369.25px;font-size:19px;color:#555;transform:scaleX(0.9404);">12</span>
<span class="t" style="left:1874.57px;top:369.25px;font-size:19px;color:#555;transform:scaleX(0.9310);">13</span>
<span class="t" style="left:1995.49px;top:369.25px;font-size:19px;color:#555;transform:scaleX(0.9217);">14</span>
<span class="t" style="left:2116.37px;top:369.25px;font-size:19px;color:#555;transform:scaleX(0.9310);">15</span>
<span class="t" style="left:2237.27px;top:369.25px;font-size:19px;color:#555;transform:scaleX(0.9310);">16</span>
<svg style="left:282px;top:369px;" width="14" height="18" viewBox="282 369 14 18" fill="none"><rect x="282" y="370" width="14" height="16" fill="#f4f4f6"/><path d="M282 370.8H296" stroke="#777" stroke-width="1.2"/><path d="M282 373.7H296" stroke="#777" stroke-width="1.2"/><path d="M282 376.6H296" stroke="#777" stroke-width="1.2"/><path d="M282 379.5H296" stroke="#777" stroke-width="1.2"/><path d="M282 382.4H296" stroke="#777" stroke-width="1.2"/><path d="M282 385.3H296" stroke="#777" stroke-width="1.2"/><path d="M283.2 370V386" stroke="#777" stroke-width="1.2"/><path d="M286.1 370V386" stroke="#777" stroke-width="1.2"/><path d="M289.0 370V386" stroke="#777" stroke-width="1.2"/><path d="M291.9 370V386" stroke="#777" stroke-width="1.2"/><path d="M294.8 370V386" stroke="#777" stroke-width="1.2"/></svg>
<svg style="left:794px;top:369px;" width="14" height="18" viewBox="794 369 14 18" fill="none"><rect x="794" y="370" width="14" height="16" fill="#f4f4f6"/><path d="M794 370.8H808" stroke="#777" stroke-width="1.2"/><path d="M794 373.7H808" stroke="#777" stroke-width="1.2"/><path d="M794 376.6H808" stroke="#777" stroke-width="1.2"/><path d="M794 379.5H808" stroke="#777" stroke-width="1.2"/><path d="M794 382.4H808" stroke="#777" stroke-width="1.2"/><path d="M794 385.3H808" stroke="#777" stroke-width="1.2"/><path d="M795.2 370V386" stroke="#777" stroke-width="1.2"/><path d="M798.1 370V386" stroke="#777" stroke-width="1.2"/><path d="M801.0 370V386" stroke="#777" stroke-width="1.2"/><path d="M803.9 370V386" stroke="#777" stroke-width="1.2"/><path d="M806.8 370V386" stroke="#777" stroke-width="1.2"/></svg>
<svg style="left:1308px;top:369px;" width="14" height="18" viewBox="1308 369 14 18" fill="none"><rect x="1308" y="370" width="14" height="16" fill="#f4f4f6"/><path d="M1308 370.8H1322" stroke="#777" stroke-width="1.2"/><path d="M1308 373.7H1322" stroke="#777" stroke-width="1.2"/><path d="M1308 376.6H1322" stroke="#777" stroke-width="1.2"/><path d="M1308 379.5H1322" stroke="#777" stroke-width="1.2"/><path d="M1308 382.4H1322" stroke="#777" stroke-width="1.2"/><path d="M1308 385.3H1322" stroke="#777" stroke-width="1.2"/><path d="M1309.2 370V386" stroke="#777" stroke-width="1.2"/><path d="M1312.1 370V386" stroke="#777" stroke-width="1.2"/><path d="M1315.0 370V386" stroke="#777" stroke-width="1.2"/><path d="M1317.9 370V386" stroke="#777" stroke-width="1.2"/><path d="M1320.8 370V386" stroke="#777" stroke-width="1.2"/></svg>
<svg style="left:1820px;top:369px;" width="14" height="18" viewBox="1820 369 14 18" fill="none"><rect x="1820" y="370" width="14" height="16" fill="#f4f4f6"/><path d="M1820 370.8H1834" stroke="#777" stroke-width="1.2"/><path d="M1820 373.7H1834" stroke="#777" stroke-width="1.2"/><path d="M1820 376.6H1834" stroke="#777" stroke-width="1.2"/><path d="M1820 379.5H1834" stroke="#777" stroke-width="1.2"/><path d="M1820 382.4H1834" stroke="#777" stroke-width="1.2"/><path d="M1820 385.3H1834" stroke="#777" stroke-width="1.2"/><path d="M1821.2 370V386" stroke="#777" stroke-width="1.2"/><path d="M1824.1 370V386" stroke="#777" stroke-width="1.2"/><path d="M1827.0 370V386" stroke="#777" stroke-width="1.2"/><path d="M1829.9 370V386" stroke="#777" stroke-width="1.2"/><path d="M1832.8 370V386" stroke="#777" stroke-width="1.2"/></svg>
<svg style="left:2333px;top:369px;" width="14" height="18" viewBox="2333 369 14 18" fill="none"><rect x="2333" y="370" width="14" height="16" fill="#f4f4f6"/><path d="M2333 370.8H2347" stroke="#777" stroke-width="1.2"/><path d="M2333 373.7H2347" stroke="#777" stroke-width="1.2"/><path d="M2333 376.6H2347" stroke="#777" stroke-width="1.2"/><path d="M2333 379.5H2347" stroke="#777" stroke-width="1.2"/><path d="M2333 382.4H2347" stroke="#777" stroke-width="1.2"/><path d="M2333 385.3H2347" stroke="#777" stroke-width="1.2"/><path d="M2334.2 370V386" stroke="#777" stroke-width="1.2"/><path d="M2337.1 370V386" stroke="#777" stroke-width="1.2"/><path d="M2340.0 370V386" stroke="#777" stroke-width="1.2"/><path d="M2342.9 370V386" stroke="#777" stroke-width="1.2"/><path d="M2345.8 370V386" stroke="#777" stroke-width="1.2"/></svg>
<span class="t" style="left:790.62px;top:369.25px;font-size:19px;color:#555;transform:scaleX(0.9901);opacity:.8">4</span>
<svg style="left:1838px;top:356px;" width="26" height="48" viewBox="1838 356 26 48" fill="none">
<path d="M1841.8 358.6H1860V365.6L1851 373.6L1841.8 365.6Z" fill="#fff" stroke="#666" stroke-width="1.3"/>
<path d="M1841.8 396.3V389.4L1851 381.4L1860 389.4V396.3Z" fill="#fff" stroke="#666" stroke-width="1.3"/>
<rect x="1841.8" y="396.3" width="18.2" height="6" fill="#fff" stroke="#666" stroke-width="1.3"/>
</svg>
<svg style="left:2305px;top:378px;" width="26" height="22" viewBox="2305 378 26 22" fill="none"><path d="M2308.8 396.4V389.4L2318 381.4L2327.2 389.4V396.4Z" fill="#fff" stroke="#666" stroke-width="1.3"/></svg>
<div style="left:47px;top:403px;width:2477.5px;height:629px;background:#fff;"></div>
<div style="left:2524.5px;top:403px;width:1px;height:629px;background:#c8c8c8;"></div>
<div style="left:2526px;top:1032px;width:31px;height:34px;background:#f1f1f1;"></div>
<div style="left:46px;top:403px;width:1px;height:663px;background:#cfcfcf;"></div>
<div style="left:3px;top:518.5px;width:37px;height:547.5px;background:#fff;"></div>
<svg style="left:14px;top:420px;" width="20" height="630" viewBox="14 420 20 630" fill="none"><path d="M23 427.4H27.1" stroke="#505050" stroke-width="1.4"/><path d="M18 457.7H29.2" stroke="#505050" stroke-width="1.4"/><path d="M23 487.9H27.1" stroke="#505050" stroke-width="1.4"/><path d="M23 548.3H27.1" stroke="#505050" stroke-width="1.4"/><path d="M18 578.6H29.2" stroke="#505050" stroke-width="1.4"/><path d="M23 608.8H27.1" stroke="#505050" stroke-width="1.4"/><path d="M23 669.2H27.1" stroke="#505050" stroke-width="1.4"/><path d="M18 699.5H29.2" stroke="#505050" stroke-width="1.4"/><path d="M23 729.7H27.1" stroke="#505050" stroke-width="1.4"/><path d="M23 790.1H27.1" stroke="#505050" stroke-width="1.4"/><path d="M18 820.4H29.2" stroke="#505050" stroke-width="1.4"/><path d="M23 850.6H27.1" stroke="#505050" stroke-width="1.4"/><path d="M23 911.0H27.1" stroke="#505050" stroke-width="1.4"/><path d="M18 941.2H29.2" stroke="#505050" stroke-width="1.4"/><path d="M23 971.5H27.1" stroke="#505050" stroke-width="1.4"/><path d="M23 1040H27.1" stroke="#505050" stroke-width="1.4"/></svg>
<span class="t" style="left:3px;top:629.1px;width:40px;height:20px;line-height:20px;text-align:center;font-size:19px;color:#555;transform:rotate(-90deg);transform-origin:50% 50%">1</span>
<span class="t" style="left:3px;top:750.0px;width:40px;height:20px;line-height:20px;text-align:center;font-size:19px;color:#555;transform:rotate(-90deg);transform-origin:50% 50%">2</span>
<span class="t" style="left:3px;top:870.9px;width:40px;height:20px;line-height:20px;text-align:center;font-size:19px;color:#555;transform:rotate(-90deg);transform-origin:50% 50%">3</span>
<span class="t" style="left:3px;top:991.8px;width:40px;height:20px;line-height:20px;text-align:center;font-size:19px;color:#555;transform:rotate(-90deg);transform-origin:50% 50%">4</span>
<div style="left:296px;top:470px;width:2055px;height:461px;background:#1b5cbe;"></div>
<div style="left:300px;top:596.5px;width:91px;height:63.5px;background:#fff;"></div>
<div style="left:395px;top:596.5px;width:382px;height:63.5px;background:#fff;"></div>
<div style="left:781px;top:596.5px;width:151.9px;height:63.5px;background:#fff;"></div>
<div style="left:936.9px;top:596.5px;width:151.85px;height:63.5px;background:#fff;"></div>
<div style="left:1092.75px;top:596.5px;width:151.85px;height:63.5px;background:#fff;"></div>
<div style="left:1248.6px;top:596.5px;width:151.9px;height:63.5px;background:#fff;"></div>
<div style="left:1404.5px;top:596.5px;width:151.9px;height:63.5px;background:#fff;"></div>
<div style="left:1560.4px;top:596.5px;width:151.85px;height:63.5px;background:#fff;"></div>
<div style="left:1716.25px;top:596.5px;width:151.85px;height:63.5px;background:#fff;"></div>
<div style="left:1872.1px;top:596.5px;width:151.9px;height:63.5px;background:#fff;"></div>
<div style="left:2028px;top:596.5px;width:319px;height:63.5px;background:#fff;"></div>
<div style="left:300px;top:664px;width:91px;height:62px;background:#fff;"></div>
<div style="left:395px;top:664px;width:382px;height:62px;background:#fff;"></div>
<div style="left:781px;top:664px;width:151.9px;height:62px;background:#fff;"></div>
<div style="left:936.9px;top:664px;width:151.85px;height:62px;background:#fff;"></div>
<div style="left:1092.75px;top:664px;width:151.85px;height:62px;background:#fff;"></div>
<div style="left:1248.6px;top:664px;width:151.9px;height:62px;background:#fff;"></div>
<div style="left:1404.5px;top:664px;width:151.9px;height:62px;background:#fff;"></div>
<div style="left:1560.4px;top:664px;width:151.85px;height:62px;background:#fff;"></div>
<div style="left:1716.25px;top:664px;width:151.85px;height:62px;background:#fff;"></div>
<div style="left:1872.1px;top:664px;width:151.9px;height:62px;background:#fff;"></div>
<div style="left:2028px;top:664px;width:319px;height:62px;background:#fff;"></div>
<div style="left:300px;top:730px;width:91px;height:63px;background:#fff;"></div>
<div style="left:395px;top:730px;width:382px;height:63px;background:#fff;"></div>
<div style="left:781px;top:730px;width:151.9px;height:63px;background:#fff;"></div>
<div style="left:936.9px;top:730px;width:151.85px;height:63px;background:#fff;"></div>
<div style="left:1092.75px;top:730px;width:151.85px;height:63px;background:#fff;"></div>
<div style="left:1248.6px;top:730px;width:151.9px;height:63px;background:#fff;"></div>
<div style="left:1404.5px;top:730px;width:151.9px;height:63px;background:#fff;"></div>
<div style="left:1560.4px;top:730px;width:151.85px;height:63px;background:#fff;"></div>
<div style="left:1716.25px;top:730px;width:151.85px;height:63px;background:#fff;"></div>
<div style="left:1872.1px;top:730px;width:151.9px;height:63px;background:#fff;"></div>
<div style="left:2028px;top:730px;width:319px;height:63px;background:#fff;"></div>
<div style="left:300px;top:797px;width:91px;height:63px;background:#fff;"></div>
<div style="left:395px;top:797px;width:382px;height:63px;background:#fff;"></div>
<div style="left:781px;top:797px;width:151.9px;height:63px;background:#fff;"></div>
<div style="left:936.9px;top:797px;width:151.85px;height:63px;background:#fff;"></div>
<div style="left:1092.75px;top:797px;width:151.85px;height:63px;background:#fff;"></div>
<div style="left:1248.6px;top:797px;width:151.9px;height:63px;background:#fff;"></div>
<div style="left:1404.5px;top:797px;width:151.9px;height:63px;background:#fff;"></div>
<div style="left:1560.4px;top:797px;width:151.85px;height:63px;background:#fff;"></div>
<div style="left:1716.25px;top:797px;width:151.85px;height:63px;background:#fff;"></div>
<div style="left:1872.1px;top:797px;width:151.9px;height:63px;background:#fff;"></div>
<div style="left:2028px;top:797px;width:319px;height:63px;background:#fff;"></div>
<div style="left:300px;top:864px;width:91px;height:63px;background:#fff;"></div>
<div style="left:395px;top:864px;width:382px;height:63px;background:#fff;"></div>
<div style="left:781px;top:864px;width:151.9px;height:63px;background:#fff;"></div>
<div style="left:936.9px;top:864px;width:151.85px;height:63px;background:#fff;"></div>
<div style="left:1092.75px;top:864px;width:151.85px;height:63px;background:#fff;"></div>
<div style="left:1248.6px;top:864px;width:151.9px;height:63px;background:#fff;"></div>
<div style="left:1404.5px;top:864px;width:151.9px;height:63px;background:#fff;"></div>
<div style="left:1560.4px;top:864px;width:151.85px;height:63px;background:#fff;"></div>
<div style="left:1716.25px;top:864px;width:151.85px;height:63px;background:#fff;"></div>
<div style="left:1872.1px;top:864px;width:151.9px;height:63px;background:#fff;"></div>
<div style="left:2028px;top:864px;width:319px;height:63px;background:#fff;"></div>
<div style="left:391px;top:473.8px;width:4px;height:119.4px;background:#fff;"></div>
<div style="left:777px;top:473.8px;width:4px;height:119.4px;background:#fff;"></div>
<div style="left:2024px;top:473.8px;width:4px;height:119.4px;background:#fff;"></div>
<div style="left:781px;top:532px;width:1243px;height:4px;background:#fff;"></div>
<div style="left:932.9px;top:536px;width:4px;height:57.2px;background:#fff;"></div>
<div style="left:1088.75px;top:536px;width:4px;height:57.2px;background:#fff;"></div>
<div style="left:1244.6px;top:536px;width:4px;height:57.2px;background:#fff;"></div>
<div style="left:1400.5px;top:536px;width:4px;height:57.2px;background:#fff;"></div>
<div style="left:1556.4px;top:536px;width:4px;height:57.2px;background:#fff;"></div>
<div style="left:1712.25px;top:536px;width:4px;height:57.2px;background:#fff;"></div>
<div style="left:1868.1px;top:536px;width:4px;height:57.2px;background:#fff;"></div>
<span class="t" style="left:321.23px;top:513.50px;font-size:43.5px;color:#fff;font-weight:bold;font-style:italic;">№</span>
<span class="t" style="left:499.80px;top:513.50px;font-size:43.5px;color:#fff;font-weight:bold;font-style:italic;transform:scaleX(0.9179);">ПІБ учня</span>
<span class="t" style="left:1201.82px;top:482.50px;font-size:43.5px;color:#fff;font-weight:bold;font-style:italic;transform:scaleX(0.9594);">Домашнє завдання</span>
<span class="t" style="left:2053.19px;top:513.50px;font-size:43.5px;color:#fff;font-weight:bold;font-style:italic;transform:scaleX(0.9237);">Середній бал</span>
<span class="t" style="left:821.66px;top:544.50px;font-size:43.5px;color:#fff;font-weight:bold;font-style:italic;transform:scaleX(0.9662);">№1</span>
<span class="t" style="left:976.43px;top:544.50px;font-size:43.5px;color:#fff;font-weight:bold;font-style:italic;transform:scaleX(0.9705);">№2</span>
<span class="t" style="left:1132.28px;top:544.50px;font-size:43.5px;color:#fff;font-weight:bold;font-style:italic;transform:scaleX(0.9705);">№3</span>
<span class="t" style="left:1288.15px;top:544.50px;font-size:43.5px;color:#fff;font-weight:bold;font-style:italic;transform:scaleX(0.9734);">№4</span>
<span class="t" style="left:1444.07px;top:544.50px;font-size:43.5px;color:#fff;font-weight:bold;font-style:italic;transform:scaleX(0.9562);">№5</span>
<span class="t" style="left:1599.94px;top:544.50px;font-size:43.5px;color:#fff;font-weight:bold;font-style:italic;transform:scaleX(0.9618);">№6</span>
<span class="t" style="left:1755.79px;top:544.50px;font-size:43.5px;color:#fff;font-weight:bold;font-style:italic;transform:scaleX(0.9647);">№8</span>
<span class="t" style="left:1911.66px;top:544.50px;font-size:43.5px;color:#fff;font-weight:bold;font-style:italic;transform:scaleX(0.9676);">№9</span>
<span class="t" style="left:318.95px;top:608.60px;font-size:43.3px;color:#1b5cbe;font-weight:bold;transform:scaleX(1.0974);">1.</span>
<span class="t" style="left:415.75px;top:608.60px;font-size:43.3px;color:#1b5cbe;font-weight:bold;font-style:italic;transform:scaleX(0.8998);">Сміливий С.С.</span>
<span class="t" style="left:843.19px;top:605.00px;font-size:48.5px;color:#1b5cbe;font-weight:bold;">8</span>
<span class="t" style="left:999.07px;top:605.00px;font-size:48.5px;color:#1b5cbe;font-weight:bold;">7</span>
<span class="t" style="left:1154.92px;top:605.00px;font-size:48.5px;color:#1b5cbe;font-weight:bold;">7</span>
<span class="t" style="left:1310.79px;top:605.00px;font-size:48.5px;color:#1b5cbe;font-weight:bold;">8</span>
<span class="t" style="left:1468.44px;top:605.00px;font-size:45.5px;color:#1b5cbe;font-weight:bold;transform:scaleX(0.9750);">9</span>
<span class="t" style="left:1624.31px;top:605.00px;font-size:45.5px;color:#1b5cbe;font-weight:bold;transform:scaleX(0.9750);">8</span>
<span class="t" style="left:1785.04px;top:605.00px;font-size:45.5px;color:#1b5cbe;font-weight:bold;transform:scaleX(0.9750);">-</span>
<span class="t" style="left:1936.04px;top:605.00px;font-size:45.5px;color:#1b5cbe;font-weight:bold;transform:scaleX(0.9750);">9</span>
<span class="t" style="left:320.19px;top:674.60px;font-size:43.3px;color:#1b5cbe;font-weight:bold;transform:scaleX(1.0598);">2.</span>
<span class="t" style="left:417.02px;top:674.60px;font-size:43.3px;color:#1b5cbe;font-weight:bold;font-style:italic;transform:scaleX(0.9333);">Хоробрий Х.Х.</span>
<span class="t" style="left:843.19px;top:671.00px;font-size:48.5px;color:#1b5cbe;font-weight:bold;">8</span>
<span class="t" style="left:999.07px;top:671.00px;font-size:48.5px;color:#1b5cbe;font-weight:bold;">9</span>
<span class="t" style="left:1154.92px;top:671.00px;font-size:48.5px;color:#1b5cbe;font-weight:bold;">8</span>
<span class="t" style="left:1296.85px;top:671.00px;font-size:48.5px;color:#1b5cbe;font-weight:bold;">10</span>
<span class="t" style="left:1455.69px;top:671.00px;font-size:45.5px;color:#1b5cbe;font-weight:bold;transform:scaleX(0.9750);">10</span>
<span class="t" style="left:1611.56px;top:671.00px;font-size:45.5px;color:#1b5cbe;font-weight:bold;transform:scaleX(0.9750);">10</span>
<span class="t" style="left:1780.16px;top:671.00px;font-size:45.5px;color:#1b5cbe;font-weight:bold;transform:scaleX(0.9750);">8</span>
<span class="t" style="left:1936.04px;top:671.00px;font-size:45.5px;color:#1b5cbe;font-weight:bold;transform:scaleX(0.9750);">9</span>
<span class="t" style="left:320.67px;top:741.60px;font-size:43.3px;color:#1b5cbe;font-weight:bold;transform:scaleX(1.0455);">3.</span>
<span class="t" style="left:415.86px;top:741.60px;font-size:43.3px;color:#1b5cbe;font-weight:bold;font-style:italic;transform:scaleX(0.9747);">Розумний Р.Р.</span>
<span class="t" style="left:830.22px;top:738.00px;font-size:48.5px;color:#1b5cbe;font-weight:bold;">11</span>
<span class="t" style="left:999.07px;top:738.00px;font-size:48.5px;color:#1b5cbe;font-weight:bold;">7</span>
<span class="t" style="left:1140.97px;top:738.00px;font-size:48.5px;color:#1b5cbe;font-weight:bold;">10</span>
<span class="t" style="left:1310.79px;top:738.00px;font-size:48.5px;color:#1b5cbe;font-weight:bold;">7</span>
<span class="t" style="left:1468.44px;top:738.00px;font-size:45.5px;color:#1b5cbe;font-weight:bold;transform:scaleX(0.9750);">8</span>
<span class="t" style="left:1624.31px;top:738.00px;font-size:45.5px;color:#1b5cbe;font-weight:bold;transform:scaleX(0.9750);">8</span>
<span class="t" style="left:1780.16px;top:738.00px;font-size:45.5px;color:#1b5cbe;font-weight:bold;transform:scaleX(0.9750);">7</span>
<span class="t" style="left:1923.29px;top:738.00px;font-size:45.5px;color:#1b5cbe;font-weight:bold;transform:scaleX(0.9750);">10</span>
<span class="t" style="left:321.13px;top:808.60px;font-size:43.3px;color:#1b5cbe;font-weight:bold;transform:scaleX(1.0316);">4.</span>
<span class="t" style="left:415.86px;top:808.60px;font-size:43.3px;color:#1b5cbe;font-weight:bold;font-style:italic;transform:scaleX(0.9686);">Кмітливий К.К.</span>
<span class="t" style="left:843.19px;top:805.00px;font-size:48.5px;color:#1b5cbe;font-weight:bold;">7</span>
<span class="t" style="left:999.07px;top:805.00px;font-size:48.5px;color:#1b5cbe;font-weight:bold;">6</span>
<span class="t" style="left:1154.92px;top:805.00px;font-size:48.5px;color:#1b5cbe;font-weight:bold;">8</span>
<span class="t" style="left:1310.79px;top:805.00px;font-size:48.5px;color:#1b5cbe;font-weight:bold;">7</span>
<span class="t" style="left:1468.44px;top:805.00px;font-size:45.5px;color:#1b5cbe;font-weight:bold;transform:scaleX(0.9750);">8</span>
<span class="t" style="left:1624.31px;top:805.00px;font-size:45.5px;color:#1b5cbe;font-weight:bold;transform:scaleX(0.9750);">6</span>
<span class="t" style="left:1780.16px;top:805.00px;font-size:45.5px;color:#1b5cbe;font-weight:bold;transform:scaleX(0.9750);">7</span>
<span class="t" style="left:1936.04px;top:805.00px;font-size:45.5px;color:#1b5cbe;font-weight:bold;transform:scaleX(0.9750);">7</span>
<span class="t" style="left:320.43px;top:875.60px;font-size:43.3px;color:#1b5cbe;font-weight:bold;transform:scaleX(1.0526);">5.</span>
<span class="t" style="left:417.02px;top:875.60px;font-size:43.3px;color:#1b5cbe;font-weight:bold;font-style:italic;transform:scaleX(0.9499);">Тямущий Т.Т.</span>
<span class="t" style="left:843.19px;top:872.00px;font-size:48.5px;color:#1b5cbe;font-weight:bold;">9</span>
<span class="t" style="left:999.07px;top:872.00px;font-size:48.5px;color:#1b5cbe;font-weight:bold;">9</span>
<span class="t" style="left:1140.97px;top:872.00px;font-size:48.5px;color:#1b5cbe;font-weight:bold;">10</span>
<span class="t" style="left:1297.82px;top:872.00px;font-size:48.5px;color:#1b5cbe;font-weight:bold;">11</span>
<span class="t" style="left:1455.69px;top:872.00px;font-size:45.5px;color:#1b5cbe;font-weight:bold;transform:scaleX(0.9750);">10</span>
<span class="t" style="left:1612.45px;top:872.00px;font-size:45.5px;color:#1b5cbe;font-weight:bold;transform:scaleX(0.9750);">11</span>
<span class="t" style="left:1767.41px;top:872.00px;font-size:45.5px;color:#1b5cbe;font-weight:bold;transform:scaleX(0.9750);">10</span>
<span class="t" style="left:1936.04px;top:872.00px;font-size:45.5px;color:#1b5cbe;font-weight:bold;transform:scaleX(0.9750);">9</span>
<span class="t" style="left:2173.04px;top:605.00px;font-size:48.5px;color:#1b5cbe;font-weight:bold;">9</span>
<div style="left:3px;top:1066px;width:2554px;height:2px;background:#c8c6c4;"></div>
<div style="left:3px;top:1068px;width:2554px;height:42px;background:#f5f5f5;border-radius:0 0 8px 8px"></div>
<span class="t" style="left:13.46px;top:1079.50px;font-size:20.5px;color:#3a3a3a;transform:scaleX(1.0103);">Сторінка 1 із 1</span>
<span class="t" style="left:188.35px;top:1079.50px;font-size:20.5px;color:#3a3a3a;transform:scaleX(1.0070);">Кількість слів: 7</span>
<span class="t" style="left:437.97px;top:1079.50px;font-size:20.5px;color:#3a3a3a;transform:scaleX(1.0143);">англійська (Сполучені Штати)</span>
<span class="t" style="left:756.27px;top:1079.50px;font-size:20.5px;color:#3a3a3a;transform:scaleX(1.0153);">Завбачливий ввід тексту: увімкнуто</span>
<span class="t" style="left:1485.12px;top:1079.50px;font-size:20.5px;color:#3a3a3a;transform:scaleX(1.0246);">Параметри відображення</span>
<span class="t" style="left:1801.20px;top:1079.50px;font-size:20.5px;color:#3a3a3a;transform:scaleX(0.9763);">Сфокусуватися</span>
<span class="t" style="left:2495.15px;top:1080.50px;font-size:20.5px;color:#3a3a3a;transform:scaleX(0.9438);">160%</span>
<div style="left:2046px;top:1068px;width:80px;height:42px;background:#dddddd;"></div>
<svg style="left:372px;top:1074px;" width="34" height="32" viewBox="372 1074 34 32" fill="none">
<path d="M385 1100H376V1078.2H382.5Q387.9 1078.2 387.9 1084V1093.5M387.9 1084Q387.9 1078.2 393.3 1078.2H400V1089.6" stroke="#1f1f1f" stroke-width="2"/>
<path d="M385.4 1095.8L391.9 1102.2L402.3 1091.6" stroke="#1f1f1f" stroke-width="2"/>
</svg>
<svg style="left:1448px;top:1074px;" width="34" height="32" viewBox="1448 1074 34 32" fill="none">
<path d="M1460 1093.3H1452V1078H1478V1085" stroke="#1f1f1f" stroke-width="1.9"/>
<path d="M1470.1 1085.8L1472 1088.3L1475.2 1087.6L1475.4 1090.8L1478.3 1092.3L1476.4 1094.9L1477.7 1097.9L1474.6 1098.7L1473.6 1101.8L1470.1 1100.6L1467.4 1102.4L1465.7 1099.6L1462.5 1099.4L1463.3 1096.2L1461.4 1093.6L1464.2 1091.9L1464.6 1088.6L1467.8 1088.8Z" stroke="#1f1f1f" stroke-width="1.6" stroke-linejoin="round"/>
<circle cx="1470" cy="1094.2" r="2.6" fill="#1f1f1f"/>
</svg>
<svg style="left:1764px;top:1072px;" width="36" height="34" viewBox="1764 1072 36 34" fill="none">
<path d="M1768.2 1081V1076.2H1773M1789 1076.2H1794V1081M1794 1096.5V1101.4H1789M1773 1101.4H1768.2V1096.5" stroke="#1f1f1f" stroke-width="1.9"/>
<path d="M1774.6 1080.6H1782.5L1787.6 1085.7V1097H1774.6Z M1782.5 1080.6V1085.7H1787.6" stroke="#1f1f1f" stroke-width="1.8" stroke-linejoin="round"/>
</svg>
<svg style="left:1988px;top:1072px;" width="36" height="32" viewBox="1988 1072 36 32" fill="none">
<path d="M2005 1080Q1999 1076.5 1993 1076.5V1097.5Q2000 1097.5 2005 1099.8Q2010 1097.5 2017 1097.5V1076.5Q2011 1076.5 2005 1080V1099.5" stroke="#1f1f1f" stroke-width="1.8"/>
<path d="M1996.5 1082.5H2001.5M1996.5 1086.5H2001.5M1996.5 1090.5H2001.5M1996.5 1094.5H2001.5M2008.5 1082.5H2013.5M2008.5 1086.5H2013.5M2008.5 1090.5H2013.5M2008.5 1094.5H2013.5" stroke="#1f1f1f" stroke-width="1.6"/>
</svg>
<svg style="left:2070px;top:1072px;" width="30" height="34" viewBox="2070 1072 30 34" fill="none">
<rect x="2075.5" y="1076.4" width="19.3" height="25" stroke="#1f1f1f" stroke-width="1.9"/>
<path d="M2079 1081.3H2091.5M2079 1085.3H2091.5M2079 1089.3H2091.5M2079 1093.3H2091.5M2079 1097.3H2091.5" stroke="#1f1f1f" stroke-width="1.7"/>
</svg>
<svg style="left:2148px;top:1072px;" width="36" height="34" viewBox="2148 1072 36 34" fill="none">
<path d="M2161 1099.3H2153.3V1076.4H2176.4V1083" stroke="#1f1f1f" stroke-width="1.9"/>
<path d="M2156.5 1081H2173M2156.5 1085H2166M2156.5 1089H2162M2156.5 1093H2160.5" stroke="#1f1f1f" stroke-width="1.6"/>
<circle cx="2171" cy="1093.8" r="8.2" fill="#f5f5f5" stroke="#1f1f1f" stroke-width="1.9"/>
<path d="M2163 1093.8H2179M2171 1085.6V1102" stroke="#1f1f1f" stroke-width="1.5"/>
<ellipse cx="2171" cy="1093.8" rx="3.8" ry="8.2" stroke="#1f1f1f" stroke-width="1.4"/>
</svg>
<svg style="left:2214px;top:1074px;" width="260" height="30" viewBox="2214 1074 260 30" fill="none">
<path d="M2218.4 1088.4H2233.2" stroke="#555" stroke-width="1.5"/>
<path d="M2244.8 1088.6H2443.1" stroke="#666" stroke-width="1.6"/>
<path d="M2344 1084V1093.8" stroke="#666" stroke-width="1.6"/>
<rect x="2354.2" y="1078" width="9.8" height="21.8" fill="#666"/>
<path d="M2454.2 1088.5H2469.2M2461.7 1081V1096" stroke="#444" stroke-width="1.5"/>
</svg>
</div></body></html>
